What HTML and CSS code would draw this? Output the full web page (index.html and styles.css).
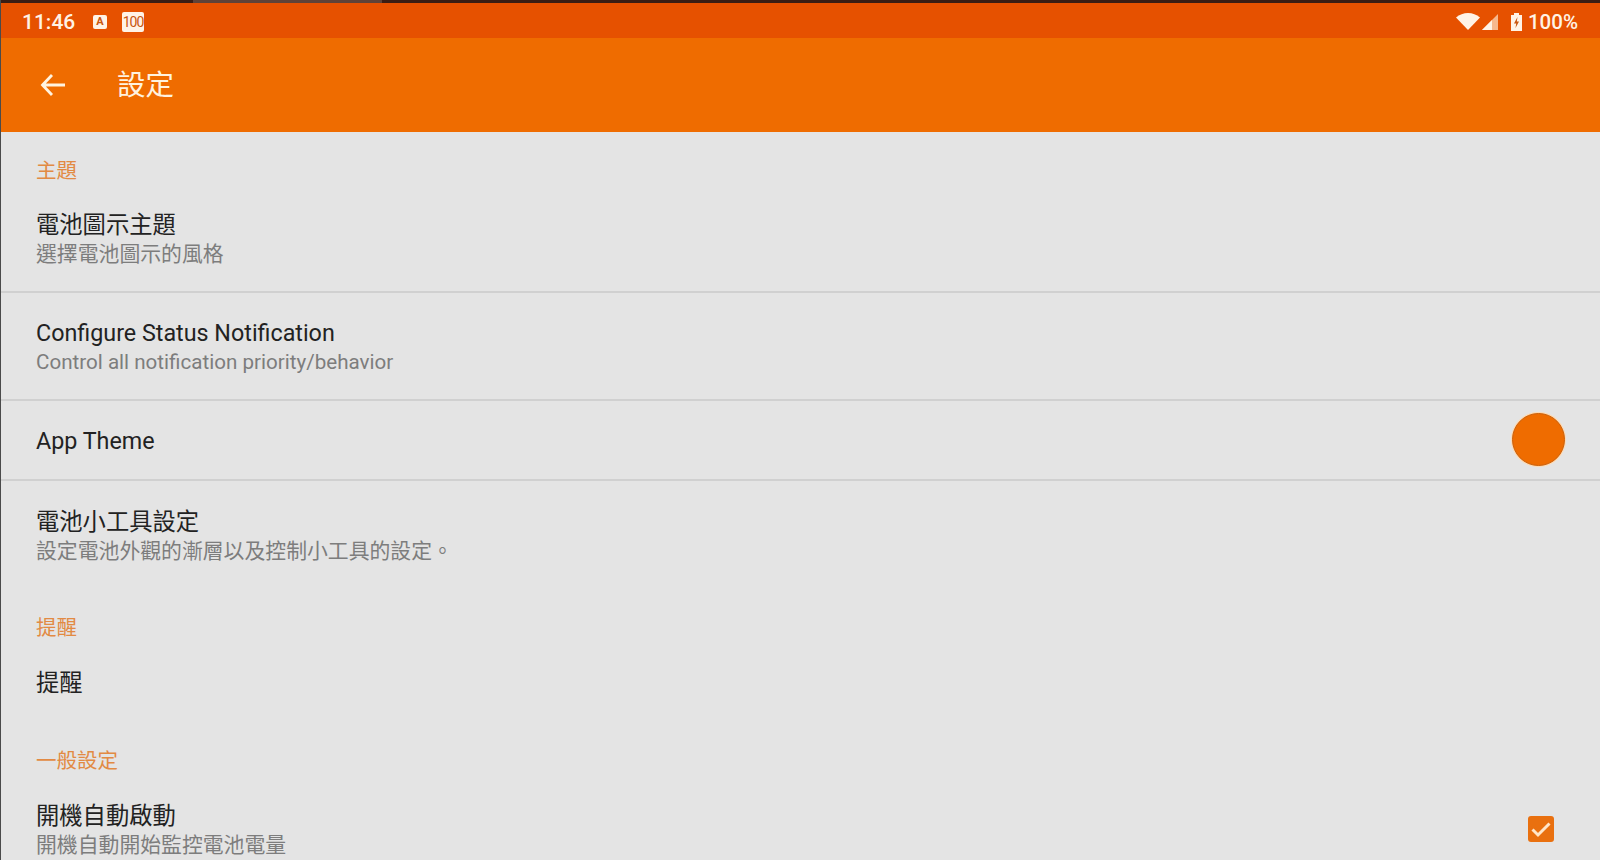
FILE: index.html
```html
<!DOCTYPE html>
<html lang="zh-Hant">
<head>
    <meta charset="UTF-8">
    <title>設定</title>
    <link rel="stylesheet" href="styles.css">
</head>
<body>
    <div class="status-bar">
        <div class="status-left">
            <span class="clock">11:46</span>
            <span class="badge-a">A</span>
            <span class="badge-100">100</span>
        </div>
        <div class="status-right">
            <svg class="wifi" width="24" height="17" viewBox="0 0 24 17"><path d="M0 4.500C3.500 1.500 7.500 0 12 0s8.500 1.500 12 4.500L12 17z" fill="#fff3e6"/></svg>
            <svg class="signal" width="16" height="16" viewBox="0 0 16 16"><path d="M16 0v16H0z" fill="#f6b88e"/><path d="M10 6v10H0z" fill="#fff3e6"/></svg>
            <svg class="battery" width="11" height="18" viewBox="0 0 11 18"><path d="M3 0h5v2h3v16H0V2h3z" fill="#fff3e6"/><path d="M6.500 4L3 10.500h2.200L4.500 15 8 8.500H5.800z" fill="#c9560f"/></svg>
            <span class="percent">100%</span>
        </div>
    </div>

    <div class="toolbar">
        <svg class="back" width="26" height="24" viewBox="0 0 26 24"><path d="M12 2L2.500 12l9.500 10M3 12h22" fill="none" stroke="#fff3e0" stroke-width="2.800"/></svg>
        <div class="toolbar-title">設定</div>
    </div>

    <div class="prefs">
        <div class="section-title">主題</div>
        <div class="row row-border">
            <div class="row-text">
                <div class="row-title">電池圖示主題</div>
                <div class="row-summary">選擇電池圖示的風格</div>
            </div>
        </div>
        <div class="row row-border">
            <div class="row-text">
                <div class="row-title">Configure Status Notification</div>
                <div class="row-summary latin">Control all notification priority/behavior</div>
            </div>
        </div>
        <div class="row row-short row-border">
            <div class="row-text">
                <div class="row-title">App Theme</div>
            </div>
            <div class="color-dot"></div>
        </div>
        <div class="row row-tall">
            <div class="row-text">
                <div class="row-title">電池小工具設定</div>
                <div class="row-summary">設定電池外觀的漸層以及控制小工具的設定。</div>
            </div>
        </div>

        <div class="section-title">提醒</div>
        <div class="row row-short">
            <div class="row-text">
                <div class="row-title">提醒</div>
            </div>
        </div>

        <div class="section-title">一般設定</div>
        <div class="row">
            <div class="row-text">
                <div class="row-title">開機自動啟動</div>
                <div class="row-summary">開機自動開始監控電池電量</div>
            </div>
            <svg class="check" width="26" height="26" viewBox="0 0 26 26"><rect width="26" height="26" rx="3" fill="#e9700f"/><path d="M4.500 13.500l5.500 5.500L21.500 7.500" fill="none" stroke="#ffe6c9" stroke-width="3"/></svg>
        </div>
    </div>
</body>
</html>
```

FILE: styles.css
```css
* {
    margin: 0;
    padding: 0;
    box-sizing: border-box;
}

html, body {
    height: 860px;
    overflow: hidden;
}

body {
    font-family: Roboto, "Noto Sans CJK TC", sans-serif;
    background: #e4e4e4;
    border-left: 1px solid #4a4a4a;
}

.status-bar {
    position: relative;
    height: 38px;
    padding: 2px 22px 0 21px;
    background: #e65100;
    border-top: 3px solid #3a1d14;
    margin-left: -1px;
    display: flex;
    align-items: center;
    justify-content: space-between;
    color: #fff3e6;
}

/* lighter bit of the strip above the status bar */
.status-bar::before {
    content: "";
    position: absolute;
    top: -3px;
    left: 193px;
    width: 189px;
    height: 3px;
    background: #5e4238;
}

.status-left, .status-right {
    display: flex;
    align-items: center;
}

.clock {
    font-size: 21px;
    font-weight: 500;
    width: 51px;
    margin-left: 1px;
}

.badge-a {
    width: 14px;
    height: 14px;
    margin-left: 20px;
    background: #fff3e6;
    border-radius: 2px;
    color: #c9560f;
    font-size: 11px;
    font-weight: bold;
    line-height: 14px;
    text-align: center;
}

.badge-100 {
    width: 22px;
    height: 20px;
    margin-left: 15px;
    background: #fff3e6;
    border-radius: 2px;
    color: #c9560f;
    font-size: 14px;
    line-height: 21px;
    letter-spacing: -1px;
    text-align: center;
}

.signal {
    margin-left: 2px;
}

.battery {
    margin-left: 13px;
}

.percent {
    font-size: 20.500px;
    font-weight: 500;
    margin-left: 6px;
}

.toolbar {
    height: 94px;
    background: #ef6c00;
    display: flex;
    align-items: center;
    padding: 0 0 2px 40px;
    margin-left: -1px;
}

.back {
    margin-top: 1px;
}

.toolbar-title {
    margin: 0 0 3px 51px;
    font-size: 28.500px;
    color: #fff3e0;
}

.section-title {
    height: 53px;
    padding: 25px 0 0 35px;
    font-size: 20.500px;
    line-height: 28px;
    color: #e28a43;
}

.row {
    height: 107px;
    padding: 0 35px;
    display: flex;
    align-items: center;
    justify-content: space-between;
}

.row-short {
    height: 80px;
}

.row-border {
    height: 108px;
    border-bottom: 2px solid #d0d0d0;
}

.row-short.row-border {
    height: 80px;
}

.row-tall {
    height: 108px;
}

.row-text {
    padding-top: 3px;
}

.row-short .row-text {
    padding-top: 1px;
}

.row-title {
    font-size: 23.300px;
    line-height: 30px;
    color: #222;
}

.row-summary {
    font-size: 20.850px;
    line-height: 29px;
    color: #7d7d7d;
}

.row-summary.latin {
    font-size: 20.600px;
}

.color-dot {
    width: 53px;
    height: 53px;
    margin-bottom: 2px;
    border-radius: 50%;
    background: #ef6c00;
    border: 1px solid #c9600c;
    box-shadow: 0 0 0 1px #ffd9b0;
}

.check {
    margin-right: 11px;
}
```
